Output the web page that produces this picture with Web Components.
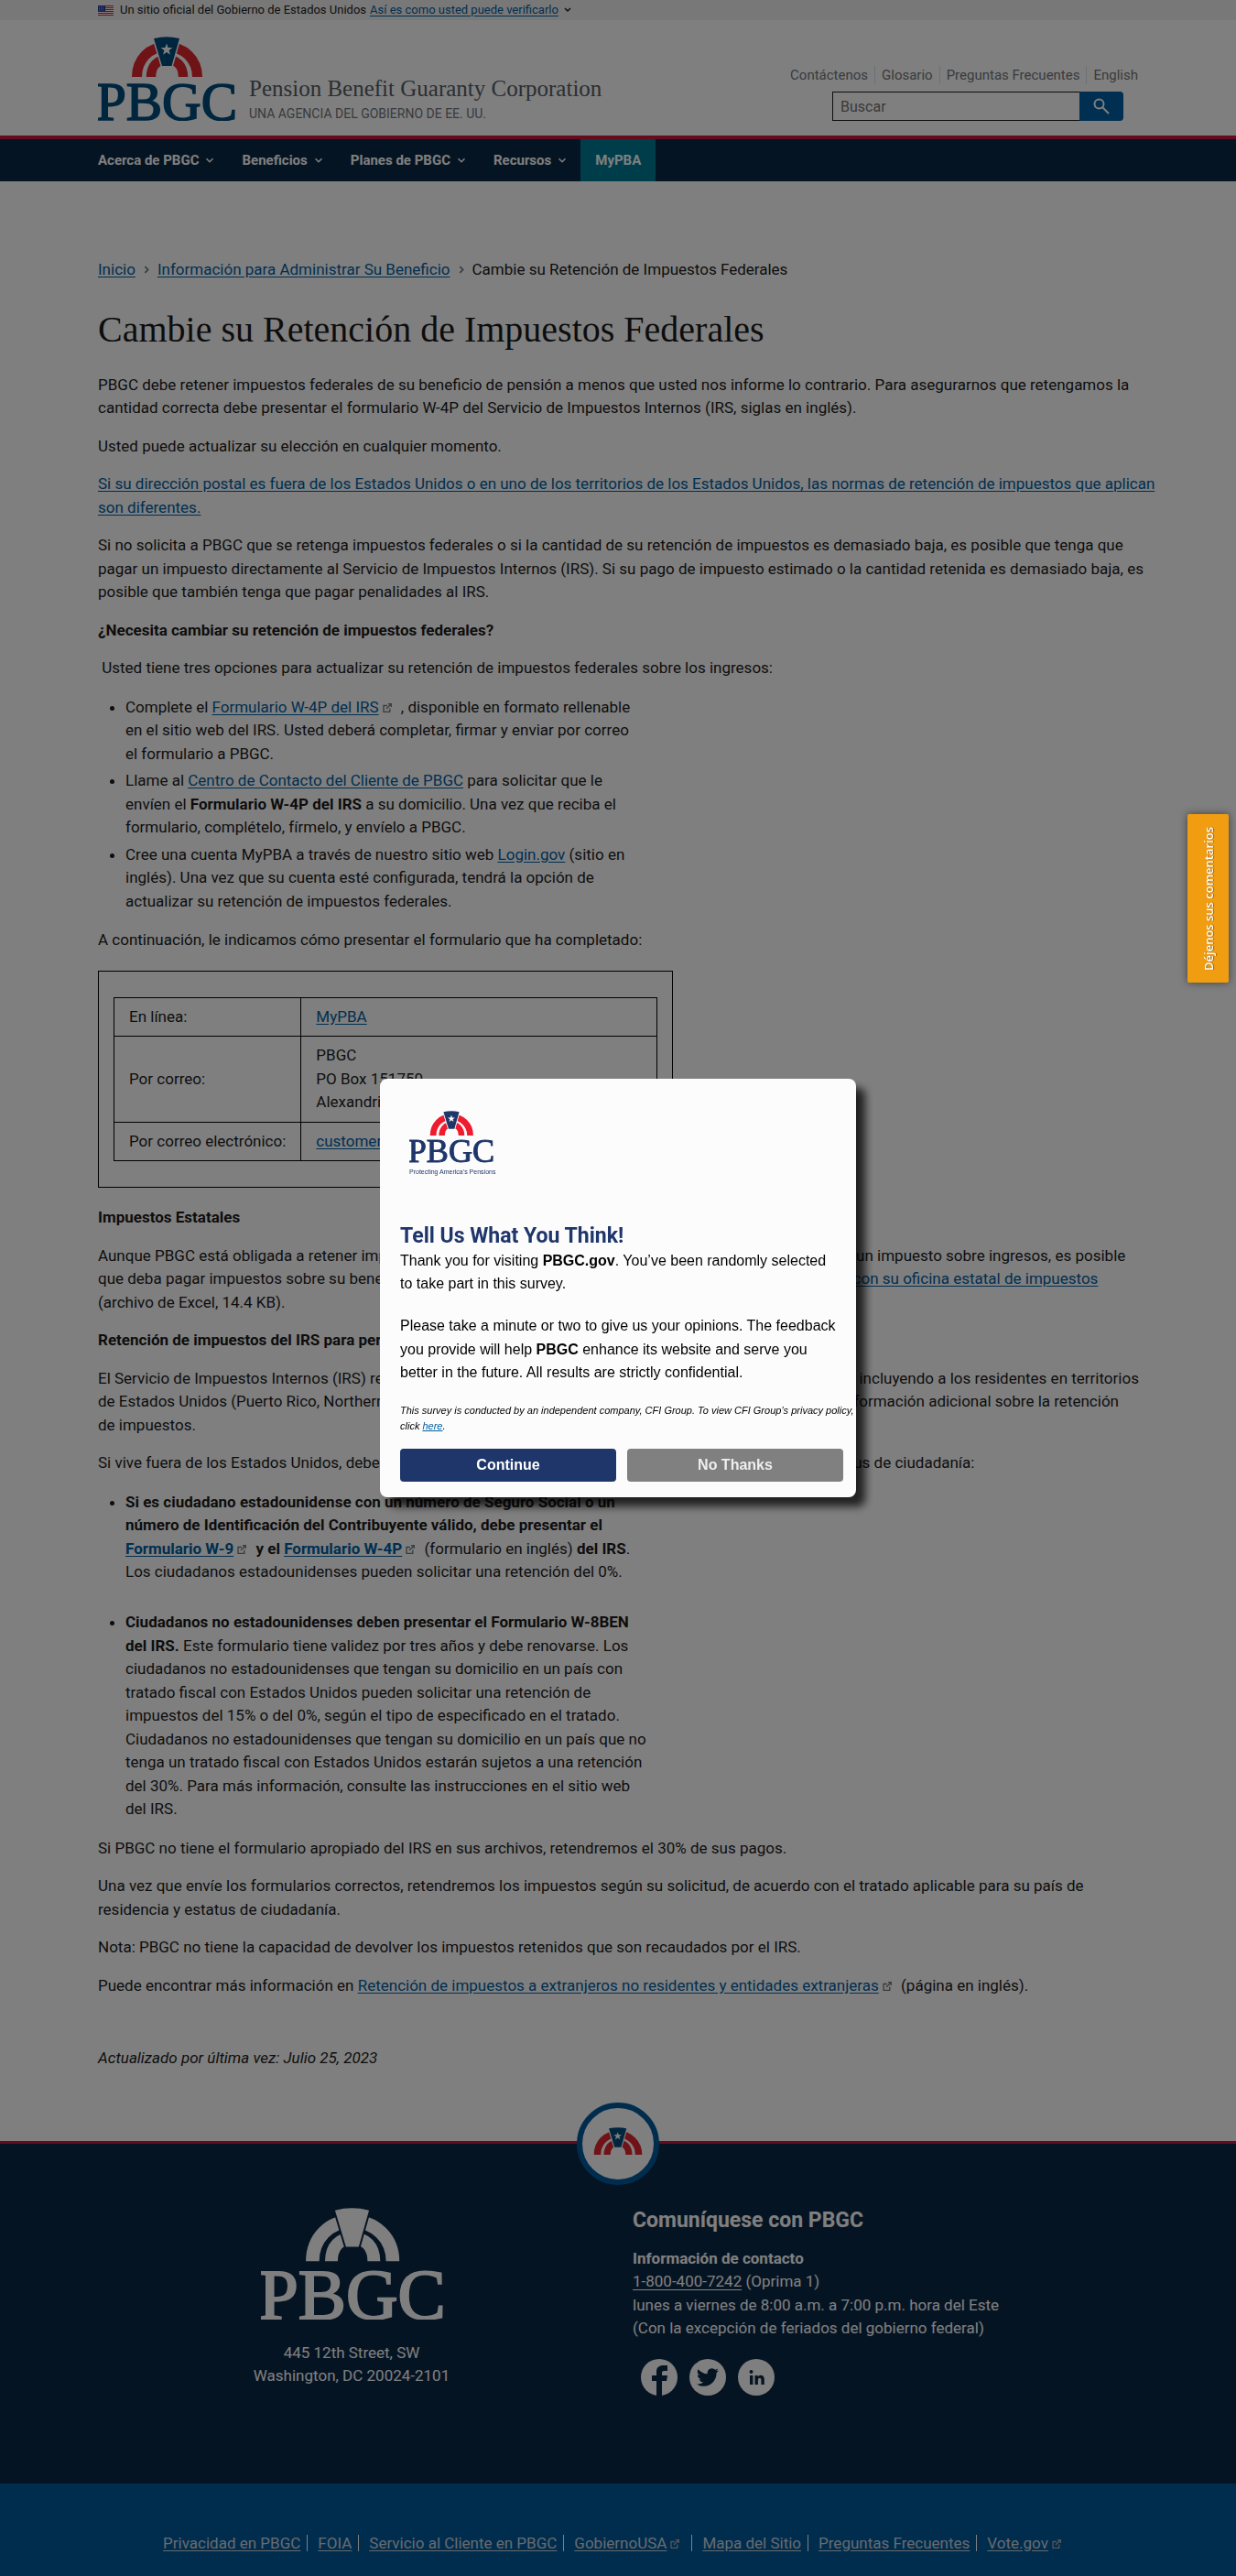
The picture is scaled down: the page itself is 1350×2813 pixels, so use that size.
<!DOCTYPE html>
<html lang="es">
<head>
<meta charset="utf-8">
<meta name="viewport" content="width=device-width, initial-scale=1">
<title>Cambie su Retención de Impuestos Federales | PBGC</title>
<style>
:root{--ink:#1b1b1b;--link:#005ea2;--navy:#0b2947;--blue:#005a9c;--red:#c8183a;--muted:#71767a}
body{margin:0;background:#fff;color:var(--ink);font:17px/1.5 Roboto,"Liberation Sans",sans-serif}
</style>
</head>
<body>
<pbgc-page></pbgc-page>
<survey-dialog></survey-dialog>
<feedback-tab>Déjenos sus comentarios</feedback-tab>

<template id="logo">
<style>
:host{display:inline-block;line-height:0}
svg{display:block;width:100%;height:auto}
.arch{fill:none;stroke:var(--logo-arch,#e0262f)}
.key{fill:var(--logo-ink,#004b7c);stroke:var(--logo-gap,#fff);stroke-width:3;paint-order:stroke}
.star{fill:var(--logo-star,#fff)}
text{fill:var(--logo-ink,#004b7c);stroke:var(--logo-ink,#004b7c);stroke-width:1.6;font:59px "Liberation Serif",serif;text-anchor:middle}
</style>
<svg viewBox="0 0 150 92" role="img" aria-label="PBGC">
<path class="arch" stroke-width="11" d="M42.500 44C42.500 25 56 11 75 11S108.500 25 108.500 44"/>
<path class="arch" stroke-width="10.500" d="M58 44C58 32 65 25 75.500 25S93 32 93 44"/>
<path class="key" d="M61 2Q75 -1.500 89 2L80.500 32H70Z"/>
<path class="star" d="M75 7.500l1.600 4.600h4.900l-3.900 2.900 1.400 4.700-4-2.800-4 2.800 1.400-4.700-3.900-2.900h4.900z"/>
<text x="75" y="91">PBGC</text>
</svg>
</template>

<template id="arch">
<style>:host{display:block}svg{display:block;width:100%}.a{fill:none;stroke:#e0262f}.k{fill:#004b7c;stroke:#fff;stroke-width:3;paint-order:stroke}</style>
<svg viewBox="36 0 79 45" role="img" aria-label="PBGC">
<path class="a" stroke-width="11" d="M42.500 44C42.500 25 56 11 75 11S108.500 25 108.500 44"/>
<path class="a" stroke-width="10.500" d="M58 44C58 32 65 25 75.500 25S93 32 93 44"/>
<path class="k" d="M61 2Q75 -1.500 89 2L80.500 32H70Z"/>
<path fill="#fff" d="M75 7.500l1.600 4.600h4.900l-3.900 2.900 1.400 4.700-4-2.800-4 2.800 1.400-4.700-3.900-2.900h4.900z"/>
</svg>
</template>

<template id="ext">
<style>
:host{display:inline}
a{color:inherit;text-decoration:underline;text-underline-offset:2px}
svg{width:10px;height:10px;margin:0 6px 0 4px;color:var(--ext,#71767a)}
</style><a href="#"><slot></slot></a><svg viewBox="0 0 10 10" fill="none" stroke="currentColor" stroke-width="1.300" aria-label="externo"><path d="M5 2.500H1v6.800h6.800V5.500M4 6l5-5M6 .7h3.300V4"/></svg></template>

<template id="banner">
<style>
:host{display:block;background:#f0f0f0}
.in{max-width:1136px;margin:auto;height:22px;display:flex;align-items:center;font-size:13px;line-height:20px}
.flag{width:17px;height:11px;margin-right:7px}
a{color:var(--link);margin-left:4px;text-underline-offset:2px}
.v{width:8px;height:6px;margin-left:6px}
</style>
<div class="in">
<svg class="flag" viewBox="0 0 17 11"><path fill="#fff" d="M0 0h17v11H0z"/><path stroke="#d8232a" d="M0 .5h17M0 2.500h17M0 4.500h17M0 6.500h17M0 8.500h17M0 10.500h17"/><path fill="#1e3f9e" d="M0 0h8v6.500H0z"/><path stroke="#fff" stroke-dasharray="1 1" stroke-width=".6" d="M1 1.500h6M1 3.300h6M1 5h6"/></svg>
<span>Un sitio oficial del Gobierno de Estados Unidos</span><a href="#">Así es como usted puede verificarlo</a>
<svg class="v" viewBox="0 0 8 6" fill="none" stroke="#1b1b1b" stroke-width="1.500"><path d="M1 1l3 3 3-3"/></svg>
</div>
</template>

<template id="header">
<style>
:host{display:block}
.in{max-width:1136px;margin:auto;padding:18px 0 16px;display:flex;justify-content:space-between;align-items:flex-end}
.brand{display:flex;align-items:flex-end;gap:15px}
pbgc-logo{width:150px}
.name{font:25px/30px "Liberation Serif",serif;color:#565c65}
.sub{font-size:14px;line-height:16px;padding-top:4px;color:var(--muted)}
.side{display:flex;flex-direction:column;align-items:flex-end}
ul{display:flex;list-style:none;margin:0;padding:0;font-size:15px;line-height:20px}
li+li{margin-left:7px;padding-left:7px;border-left:1px solid #dfe1e2}
li a{color:var(--muted);text-decoration:none}
form{display:flex;margin:8px 16px 0 0;width:318px}
input{flex:1;min-width:0;box-sizing:border-box;height:32px;border:1px solid #1b1b1b;border-right:0;background:#fff;padding:0 8px;font:16px Roboto,sans-serif;color:var(--ink);border-radius:0}
input::placeholder{color:#757575;opacity:1}
button{width:48px;height:32px;border:0;border-radius:0 4px 4px 0;background:var(--link);color:#fff;padding:0;display:flex;align-items:center;justify-content:center}
nav{background:var(--navy);border-top:4px solid var(--red)}
.bar{max-width:1136px;margin:auto;display:flex;height:46px}
.bar button{width:auto;height:46px;border-radius:0;background:none;font:bold 15px Roboto,sans-serif;gap:7px;margin-right:30px}
.bar svg{width:10px;height:7px}
.bar a{background:#007b94;color:#fff;font:bold 15px/46px Roboto,sans-serif;text-decoration:none;padding:0 16px;margin-left:-15px}
</style>
<header>
<div class="in">
<div class="brand"><pbgc-logo></pbgc-logo><div><div class="name">Pension Benefit Guaranty Corporation</div><div class="sub">UNA AGENCIA DEL GOBIERNO DE EE. UU.</div></div></div>
<div class="side">
<ul><li><a href="#">Contáctenos</a></li><li><a href="#">Glosario</a></li><li><a href="#">Preguntas Frecuentes</a></li><li><a href="#">English</a></li></ul>
<form role="search"><input type="search" aria-label="Buscar" placeholder="Buscar"><button type="button" aria-label="Buscar"><svg width="18" height="18" viewBox="0 0 18 18" fill="none" stroke="#fff" stroke-width="2"><circle cx="6.500" cy="6.500" r="5"/><path d="M10.500 10.500l6.500 6.500"/></svg></button></form>
</div>
</div>
<nav><div class="bar">
<button>Acerca de PBGC<svg viewBox="0 0 8 6" fill="none" stroke="#fff" stroke-width="1.300"><path d="M1 1l3 3 3-3"/></svg></button>
<button>Beneficios<svg viewBox="0 0 8 6" fill="none" stroke="#fff" stroke-width="1.300"><path d="M1 1l3 3 3-3"/></svg></button>
<button>Planes de PBGC<svg viewBox="0 0 8 6" fill="none" stroke="#fff" stroke-width="1.300"><path d="M1 1l3 3 3-3"/></svg></button>
<button>Recursos<svg viewBox="0 0 8 6" fill="none" stroke="#fff" stroke-width="1.300"><path d="M1 1l3 3 3-3"/></svg></button>
<a href="#">MyPBA</a>
</div></nav>
</header>
</template>

<template id="article">
<style>
:host{display:block;max-width:1136px;margin:auto;padding:84px 0 61px}
a,ext-link{color:var(--link);text-underline-offset:2px}
.crumb{display:flex;align-items:center;gap:9px}
.crumb svg{width:6px;height:9px}
h1{font:40px/48px "Liberation Serif",serif;margin:28px 0 24px}
.prose{margin-right:-26px}
p{margin:0 0 16px}
ul{margin:17px 0;padding-left:30px}
li{max-width:576px;margin-bottom:4px}
li:last-child{margin:0}
.frame{border:1px solid #000;width:628px;box-sizing:border-box;padding:28px 16px;margin:20px 0}
table{border-collapse:collapse;width:100%}
th,td{border:1px solid #000;padding:8px 16px;text-align:left;font-weight:400}
th{width:111px;white-space:nowrap}
.last{margin-top:54px;font-style:italic}
</style>
<nav class="crumb" aria-label="Ruta"><a href="#">Inicio</a><svg viewBox="0 0 5 8" fill="none" stroke="#71767a" stroke-width="1.500"><path d="M1 1l3 3-3 3"/></svg><a href="#">Información para Administrar Su Beneficio</a><svg viewBox="0 0 5 8" fill="none" stroke="#71767a" stroke-width="1.500"><path d="M1 1l3 3-3 3"/></svg><span>Cambie su Retención de Impuestos Federales</span></nav>
<h1>Cambie su Retención de Impuestos Federales</h1>
<div class="prose">
<p>PBGC debe retener impuestos federales de su beneficio de pensión a menos que usted nos informe lo contrario. Para asegurarnos que retengamos la cantidad correcta debe presentar el formulario W-4P del Servicio de Impuestos Internos (IRS, siglas en inglés).</p>
<p>Usted puede actualizar su elección en cualquier momento.</p>
<p><a href="#">Si su dirección postal es fuera de los Estados Unidos o en uno de los territorios de los Estados Unidos, las normas de retención de impuestos que aplican son diferentes.</a></p>
<p>Si no solicita a PBGC que se retenga impuestos federales o si la cantidad de su retención de impuestos es demasiado baja, es posible que tenga que<br>pagar un impuesto directamente al Servicio de Impuestos Internos (IRS). Si su pago de impuesto estimado o la cantidad retenida es demasiado baja, es<br>posible que también tenga que pagar penalidades al IRS.</p>
<p><strong>¿Necesita cambiar su retención de impuestos federales?</strong></p>
<p>&nbsp;Usted tiene tres opciones para actualizar su retención de impuestos federales sobre los ingresos:</p>
<ul>
<li>Complete el <ext-link>Formulario W-4P del IRS</ext-link> , disponible en formato rellenable en&nbsp;el sitio web del IRS. Usted deberá completar, firmar y enviar por correo el&nbsp;formulario a PBGC.</li>
<li>Llame al <a href="#">Centro de Contacto del Cliente de PBGC</a> para solicitar que le<br>envíen el <strong>Formulario W-4P del IRS</strong> a su domicilio. Una vez que reciba el formulario, complételo, fírmelo, y envíelo a PBGC.</li>
<li>Cree una cuenta MyPBA a través de nuestro sitio web <a href="#">Login.gov</a> (sitio en inglés). Una vez que su cuenta esté configurada, tendrá la opción de actualizar su retención de impuestos federales.</li>
</ul>
<p>A continuación, le indicamos cómo presentar el formulario que ha completado:</p>
<div class="frame"><table>
<tr><th scope="row">En línea:</th><td><a href="#">MyPBA</a></td></tr>
<tr><th scope="row">Por correo:</th><td>PBGC<br>PO Box 151750<br>Alexandria, VA 22315</td></tr>
<tr><th scope="row">Por correo electrónico:</th><td><a href="#">customerservice@pbgc.gov</a></td></tr>
</table></div>
<p><strong>Impuestos Estatales</strong></p>
<p>Aunque PBGC está obligada a retener impuestos federales, no retiene impuestos estatales. Si su estado tiene un impuesto sobre ingresos, es posible<br>que deba pagar impuestos sobre su beneficio de pensión. Para leer más información, por favor comuníquese <a href="#">con su oficina estatal de impuestos</a><br>(archivo de Excel, 14.4 KB).</p>
<p><strong>Retención de impuestos del IRS para personas fuera de los Estados Unidos</strong></p>
<p>El Servicio de Impuestos Internos (IRS) requiere la retención de impuestos para las personas que viven afuera, incluyendo a los residentes en territorios<br>de Estados Unidos (Puerto Rico, Northern Mariana Islands, Guam, Samoa, US Virgin Islands). Consulte ya la información adicional sobre la retención<br>de impuestos.</p>
<p>Si vive fuera de los Estados Unidos, debe presentar uno de los siguientes formularios de acuerdo con su estatus de ciudadanía:</p>
<ul>
<li><strong>Si es ciudadano estadounidense con un número de Seguro Social o un número de Identificación del Contribuyente válido, debe presentar el <ext-link>Formulario W-9</ext-link> y el <ext-link>Formulario W-4P</ext-link></strong> (formulario en inglés) <strong>del IRS</strong>. Los ciudadanos estadounidenses pueden solicitar una retención del 0%.<br><br></li>
<li><strong>Ciudadanos no estadounidenses deben presentar el Formulario W-8BEN del IRS.</strong> Este formulario tiene validez por tres años y debe renovarse. Los ciudadanos no estadounidenses que tengan su domicilio en un país con tratado fiscal con Estados Unidos pueden solicitar una retención de impuestos del 15% o del 0%, según el tipo de especificado en el tratado. Ciudadanos no estadounidenses que tengan su domicilio en un país que no tenga un tratado fiscal con Estados Unidos estarán sujetos a una retención del 30%. Para más información, consulte las instrucciones en el sitio web del&nbsp;IRS.</li>
</ul>
<p>Si PBGC no tiene el formulario apropiado del IRS en sus archivos, retendremos el 30% de sus pagos.</p>
<p>Una vez que envíe los formularios correctos, retendremos los impuestos según su solicitud, de acuerdo con el tratado aplicable para su país de<br>residencia y estatus de ciudadanía.</p>
<p>Nota: PBGC no tiene la capacidad de devolver los impuestos retenidos que son recaudados por el IRS.</p>
<p>Puede encontrar más información en <ext-link>Retención de impuestos a extranjeros no residentes y entidades extranjeras</ext-link> (página en inglés).</p>
<p class="last">Actualizado por última vez: Julio 25, 2023</p>
</div>
</template>

<template id="footer">
<style>
:host{display:block;color:#fff}
.top{background:var(--navy);border-top:3px solid var(--red);position:relative;padding:70px 0 96px}
.badge{position:absolute;top:-45px;left:50%;margin-left:-45px;width:90px;height:90px;box-sizing:border-box;border:6px solid var(--blue);border-radius:50%;background:#fff;display:flex;align-items:center;justify-content:center}
.badge pbgc-arch{width:54px;margin-top:-4px}
.in{max-width:1136px;margin:auto;display:grid;grid-template-columns:554px 1fr;gap:30px}
.addr{text-align:center}
.addr pbgc-logo{display:block;width:199px;margin:0 auto 24px;--logo-ink:#fff;--logo-arch:#fff;--logo-gap:var(--navy);--logo-star:#fff}
h2{font-size:23px;line-height:28px;margin:0 0 15px}
p{margin:0}
.info a{color:#fff;text-underline-offset:3px}
.soc{display:flex;gap:13px;padding:20px 9px 0}
.soc a{width:40px;height:40px;border-radius:50%;background:#fff;display:block}
.soc svg{display:block;width:40px;height:40px}
.bottom{background:var(--blue);padding:56px 0 28px}
ul{list-style:none;margin:0;padding:0;display:flex;justify-content:center;line-height:18px}
li{padding:0 7px 0 0}
li+li{border-left:1px solid #fff;padding-left:11px}
.bottom a,.bottom ext-link{color:#d0d7de;--ext:#a9aeb1;text-underline-offset:2px}
</style>
<footer>
<div class="top">
<div class="badge"><pbgc-arch></pbgc-arch></div>
<div class="in">
<div class="addr"><pbgc-logo></pbgc-logo><p>445 12th Street, SW<br>Washington, DC 20024-2101</p></div>
<div class="info"><h2>Comuníquese con PBGC</h2>
<p><strong>Información de contacto</strong><br><a href="#">1-800-400-7242</a> (Oprima 1)<br>lunes a viernes de 8:00 a.m. a 7:00 p.m. hora del Este<br>(Con la excepción de feriados del gobierno federal)</p>
<div class="soc">
<a href="#" aria-label="Facebook"><svg viewBox="0 0 40 40"><path fill="#0b2947" d="M17 40V24h-5v-6h5v-4c0-5 3-7 7.500-7H29v6h-3.500c-1.800 0-2.500.8-2.500 2.300V18h6l-.9 6H23v16z"/></svg></a>
<a href="#" aria-label="Twitter"><svg viewBox="0 0 24 24"><path transform="translate(4.800 4.800) scale(.6)" fill="#0b2947" d="M23.950 4.570a10 10 0 0 1-2.820.77 4.960 4.960 0 0 0 2.160-2.720c-.95.560-2 .960-3.130 1.190a4.920 4.920 0 0 0-8.380 4.480C7.690 8.100 4.070 6.130 1.640 3.160a4.920 4.920 0 0 0 1.520 6.570 4.900 4.900 0 0 1-2.230-.61v.060a4.920 4.920 0 0 0 3.950 4.830 5 5 0 0 1-2.210.080 4.940 4.940 0 0 0 4.600 3.420A9.870 9.870 0 0 1 0 19.540a14 14 0 0 0 7.550 2.210c9.050 0 14-7.500 14-13.980 0-.210 0-.420-.020-.630a9.940 9.940 0 0 0 2.460-2.550z"/></svg></a>
<a href="#" aria-label="LinkedIn"><svg viewBox="0 0 40 40" fill="#0b2947"><circle cx="14.500" cy="14" r="2"/><path d="M13 18h3.400v10H13zM18.500 18h3.300v1.500c1.400-2.500 7-2.500 7 2.600V28h-3.400v-5c0-3.200-3.500-3-3.500 0v5h-3.400z"/></svg></a>
</div></div>
</div></div>
<div class="bottom"><ul><li><a href="#">Privacidad en PBGC</a></li><li><a href="#">FOIA</a></li><li><a href="#">Servicio al Cliente en PBGC</a></li><li><ext-link>GobiernoUSA</ext-link></li><li><a href="#">Mapa del Sitio</a></li><li><a href="#">Preguntas Frecuentes</a></li><li><ext-link>Vote.gov</ext-link></li></ul></div>
</footer>
</template>

<template id="page"><style>:host{display:block}</style><gov-banner></gov-banner><site-header></site-header><main><tax-article></tax-article></main><site-footer></site-footer></template>

<template id="survey">
<style>
:host{position:fixed;inset:0;background:rgba(0,0,0,.5);display:flex;align-items:center;justify-content:center;z-index:5}
.box{width:520px;box-sizing:border-box;padding:31px 14px 17px 22px;background:#fcfcfc;border-radius:8px;box-shadow:10px 10px 10px rgba(0,0,0,.75);color:#000;font:16px/1.6 "Liberation Sans",Arial,sans-serif}
.logo{width:92px;margin-left:10px;text-align:center;white-space:nowrap;color:#1f366b;font-size:7px;line-height:10px;--logo-ink:#1f366b;--logo-arch:#ee1c2e;--logo-gap:#fcfcfc}
.logo pbgc-logo{display:block;padding-top:4px;margin-bottom:5px}
h2{font:bold 23px/28px Roboto,sans-serif;color:#1f366b;margin:51px 0 0}
p{margin:0 4px 20px 0}
.small{font-size:11px;line-height:17px;font-style:italic;margin:0 -12px 16px 0}
a{color:var(--link)}
.row{display:grid;grid-template-columns:1fr 1fr;gap:12px}
button{height:36px;border:0;border-radius:4px;background:#1f366b;color:#fff;font:bold 16px "Liberation Sans",sans-serif}
button+button{background:#808080;color:#eee}
</style>
<div class="box" role="dialog" aria-labelledby="t">
<div class="logo"><pbgc-logo></pbgc-logo>Protecting America’s Pensions</div>
<h2 id="t">Tell Us What You Think!</h2>
<p>Thank you for visiting <b>PBGC.gov</b>. You’ve been randomly selected to take part in this survey.</p>
<p>Please take a minute or two to give us your opinions. The feedback you provide will help <b>PBGC</b> enhance its website and serve you better in the future. All results are strictly confidential.</p>
<p class="small">This survey is conducted by an independent company, CFI Group. To view CFI Group’s privacy policy, click <a href="#">here</a>.</p>
<div class="row"><button>Continue</button><button>No Thanks</button></div>
</div>
</template>

<template id="tab">
<style>
:host{position:fixed;z-index:6;top:889px;right:8px}
button{writing-mode:vertical-rl;transform:rotate(180deg);width:45px;height:184px;border:0;border-radius:2px;background:#f09d12;color:#fff;font:600 13px "Open Sans",sans-serif;padding:0;box-shadow:0 0 8px rgba(0,0,0,.5);text-shadow:0 1px 1px rgba(0,0,0,.4)}
</style>
<button><slot></slot></button>
</template>

<script>
const define = (name, id) => customElements.define(name, class extends HTMLElement {
  constructor() {
    super();
    this.attachShadow({mode: 'open'}).append(document.getElementById(id).content.cloneNode(true));
  }
});
define('pbgc-logo', 'logo');
define('pbgc-arch', 'arch');
define('ext-link', 'ext');
define('gov-banner', 'banner');
define('site-header', 'header');
define('tax-article', 'article');
define('site-footer', 'footer');
define('pbgc-page', 'page');
define('survey-dialog', 'survey');
define('feedback-tab', 'tab');
</script>
</body>
</html>
